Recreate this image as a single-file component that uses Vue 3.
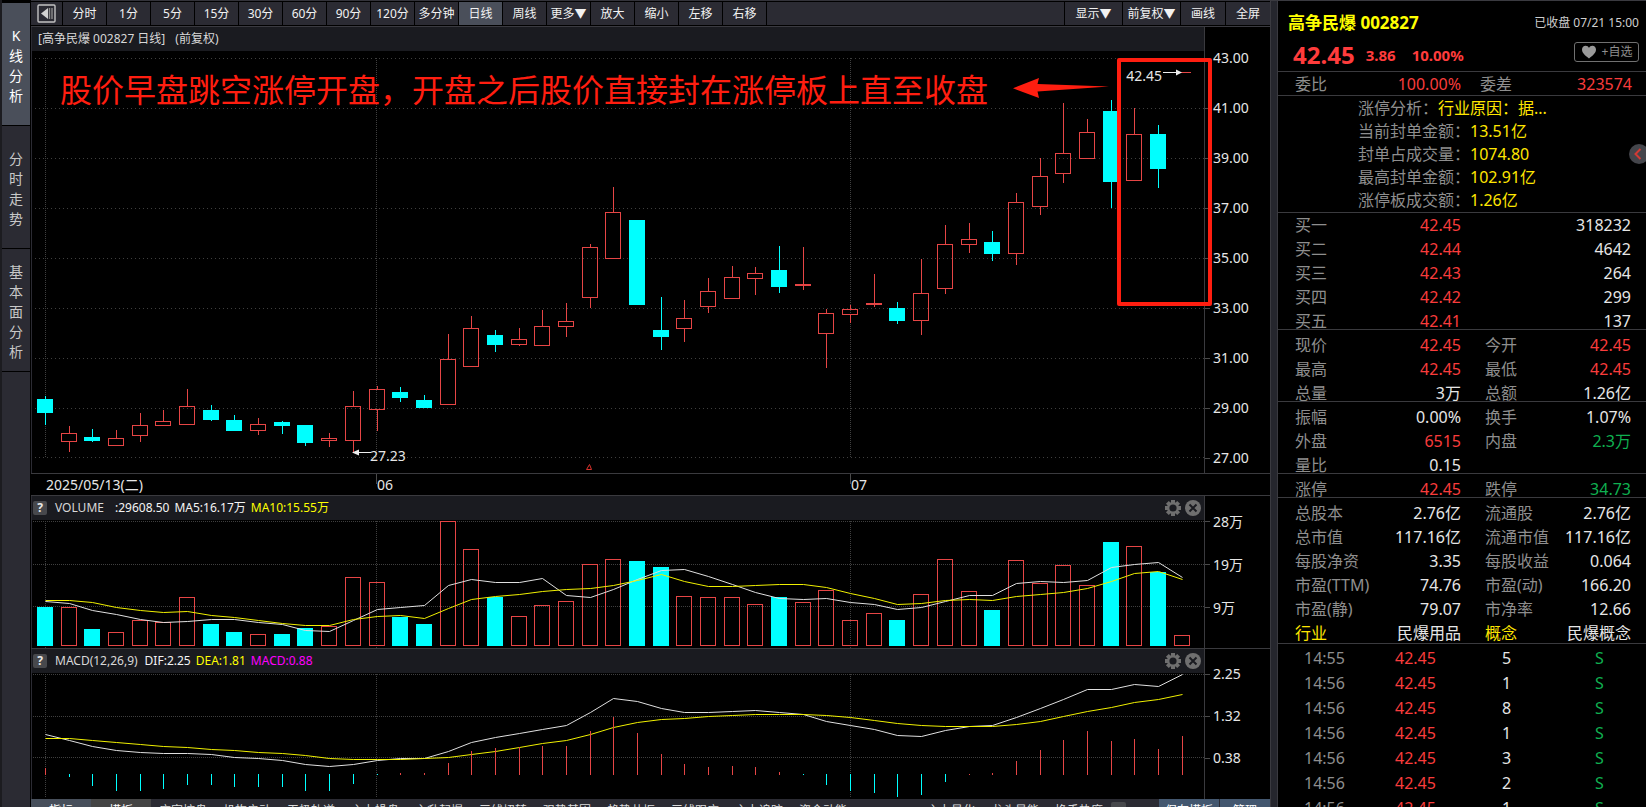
<script setup>
const sideTabs = ['K线分析', '分时走势', '基本面分析']
const periods = ['分时', '1分', '5分', '15分', '30分', '60分', '90分', '120分', '多分钟', '日线', '周线', '更多▼', '放大', '缩小', '左移', '右移']
const tools = ['显示▼', '前复权▼', '画线', '全屏']

const x = (i) => Math.round(45 + 23.68 * i)

// up flag, body top, body bottom, wick top, wick bottom
const candles = [
  [0, 399, 413, 396, 425], [1, 433, 442, 426, 452], [0, 437, 441, 429, 442], [1, 438, 446, 430, 446],
  [1, 425, 436, 413, 442], [1, 421, 426, 410, 426], [1, 406, 425, 389, 425], [0, 410, 420, 405, 421],
  [0, 420, 431, 415, 431], [1, 424, 431, 418, 435], [0, 422, 426, 421, 434], [0, 425, 443, 425, 446],
  [1, 438, 441, 433, 447], [1, 406, 441, 391, 452], [1, 389, 410, 386, 431], [0, 392, 398, 387, 402],
  [0, 400, 408, 395, 408], [1, 359, 405, 334, 405], [1, 328, 367, 316, 367], [0, 335, 345, 330, 352],
  [1, 339, 345, 328, 346], [1, 326, 346, 310, 346], [1, 321, 327, 303, 337], [1, 247, 298, 244, 308],
  [1, 212, 259, 187, 259], [0, 220, 305, 220, 305], [0, 330, 337, 297, 350], [1, 318, 329, 300, 342],
  [1, 291, 307, 278, 313], [1, 277, 299, 266, 299], [1, 273, 279, 267, 295], [0, 270, 287, 246, 293],
  [1, 284, 286, 247, 290], [1, 313, 334, 309, 368], [1, 309, 315, 305, 323], [1, 303, 305, 274, 307],
  [0, 308, 321, 302, 324], [1, 293, 321, 259, 335], [1, 244, 289, 225, 294], [1, 239, 245, 223, 253],
  [0, 242, 254, 231, 261], [1, 202, 254, 193, 265], [1, 176, 207, 158, 215], [1, 153, 174, 103, 183],
  [1, 132, 159, 119, 159], [0, 111, 182, 100, 208], [1, 134, 181, 108, 181], [0, 134, 169, 125, 188],
  [1, 72, 73, 72, 73],
]
const volTops = [
  607, 607, 629, 632, 620, 622, 597, 624, 632, 634, 634, 628, 626, 577, 582, 617, 624, 521, 549, 597, 616, 605, 601, 564, 559,
  561, 567, 596, 597, 597, 604, 597, 602, 590, 620, 613, 620, 594, 559, 591, 610, 560, 583, 565, 585, 542, 546, 572, 635,
]
const ma5 = [
  601, 603, 610, 614, 619, 622, 621, 619, 619, 622, 624, 630, 631, 620, 609, 607, 605, 585, 579, 582, 582, 578, 595, 597, 589,
  579, 570, 569, 576, 584, 592, 598, 599, 598, 602, 604, 609, 607, 601, 595, 595, 583, 581, 582, 580, 567, 564, 562, 577,
]
const ma10 = [
  600, 600, 602, 607, 610, 612, 611, 615, 617, 620, 623, 625, 625, 619, 616, 615, 618, 608, 599, 596, 594, 591, 589, 588, 585,
  580, 574, 581, 586, 586, 585, 584, 584, 587, 593, 598, 604, 603, 600, 599, 600, 596, 594, 592, 588, 581, 573, 571, 579,
]
const dif = [
  734, 740, 746, 750, 752, 753, 753, 754, 757, 758, 760, 764, 766, 764, 760, 758, 758, 751, 742, 737, 733, 729, 725, 712, 698,
  701, 708, 712, 712, 711, 710, 712, 714, 721, 725, 729, 735, 736, 730, 726, 725, 717, 708, 699, 689, 689, 684, 686, 674,
]
const dea = [
  738, 738, 740, 742, 744, 746, 747, 749, 750, 752, 753, 755, 758, 759, 759, 759, 758, 757, 754, 751, 747, 743, 740, 734, 727,
  722, 719, 718, 716, 715, 714, 714, 714, 715, 717, 720, 723, 725, 726, 726, 726, 724, 721, 716, 711, 707, 702, 699, 694,
]
const macd = [
  768, 777, 786, 791, 791, 789, 785, 785, 787, 787, 787, 791, 791, 784, 775, 773, 773, 763, 751, 748, 747, 746, 746, 731, 717,
  733, 754, 764, 767, 766, 767, 772, 775, 785, 791, 793, 797, 795, 782, 774, 773, 761, 750, 740, 731, 741, 739, 749, 736,
]
const line = (ys) => ys.map((y, i) => `${x(i) + 0.5},${y + 0.5}`).join(' ')

const monthLines = [45, 376, 850]
const priceRows = [58, 108, 158, 208, 258, 308, 358, 408, 457]
const priceLabels = ['43.00', '41.00', '39.00', '37.00', '35.00', '33.00', '31.00', '29.00', '27.00']

const analysis = [
  ['涨停分析：', '行业原因：据...'],
  ['当前封单金额：', '13.51亿'],
  ['封单占成交量：', '1074.80'],
  ['最高封单金额：', '102.91亿'],
  ['涨停板成交额：', '1.26亿'],
]
const bids = [['买一', '42.45', '318232'], ['买二', '42.44', '4642'], ['买三', '42.43', '264'], ['买四', '42.42', '299'], ['买五', '42.41', '137']]
const stats = [
  [['现价', '42.45', 'up', '今开', '42.45', 'up'], ['最高', '42.45', 'up', '最低', '42.45', 'up'], ['总量', '3万', '', '总额', '1.26亿', '']],
  [['振幅', '0.00%', '', '换手', '1.07%', ''], ['外盘', '6515', 'up', '内盘', '2.3万', 'down'], ['量比', '0.15', '', '', '', '']],
  [['涨停', '42.45', 'up', '跌停', '34.73', 'down']],
  [
    ['总股本', '2.76亿', '', '流通股', '2.76亿', ''],
    ['总市值', '117.16亿', '', '流通市值', '117.16亿', ''],
    ['每股净资', '3.35', '', '每股收益', '0.064', ''],
    ['市盈(TTM)', '74.76', '', '市盈(动)', '166.20', ''],
    ['市盈(静)', '79.07', '', '市净率', '12.66', ''],
    ['行业', '民爆用品', '', '概念', '民爆概念', ''],
  ],
]
const trades = [['14:55', 5], ['14:56', 1], ['14:56', 8], ['14:56', 1], ['14:56', 3], ['14:56', 2], ['14:56', 1]]
const templates = ['庄家控盘', '机构启动', '无极轨道', '主力操盘', '主升起爆', '三线扭转', '强势基因', '趋势共振', '三线跟庄', '主力追踪', '资金动能']
const extras = ['主力量化', '龙头量能', '换手热度']
const teeth = [0, 45, 90, 135, 180, 225, 270, 315]
</script>

<template>
  <div class="app">
    <nav class="side">
      <button v-for="(t, i) in sideTabs" :key="t" type="button" :class="{ active: i === 0 }">
        <span v-for="c in t" :key="c">{{ c }}</span>
      </button>
    </nav>

    <main class="center">
      <div class="toolbar">
        <button class="back" type="button" aria-label="后退">
          <svg width="20" height="20" viewBox="0 0 20 20">
            <rect x="1" y="1" width="17" height="17" rx="1" fill="none" stroke="#c4c4c4" stroke-width="1.4" />
            <path d="M4 9.5 L11 4 V15 Z" fill="#d2d2d2" />
            <path d="M12.5 4 V15 M15 4 V15" stroke="#8d8d8d" stroke-width="1.4" />
          </svg>
        </button>
        <button v-for="p in periods" :key="p" type="button" class="period" :class="{ active: p === '日线' }">{{ p }}</button>
        <span class="spacer"></span>
        <button v-for="(t, i) in tools" :key="t" type="button" :class="i < 2 ? 'wide' : 'tool'">{{ t }}</button>
      </div>

      <section class="pane price">
        <div class="plot">
          <h1 class="pane-head title"><span>[高争民爆 002827 日线]</span><span>(前复权)</span></h1>
          <svg class="chart" height="422" viewBox="32 51 1172 422" preserveAspectRatio="none" shape-rendering="crispEdges">
            <path v-for="y in priceRows" :key="y" :d="`M35 ${y + 0.5} H1204`" class="grid sparse" />
            <path v-for="m in monthLines" :key="m" :d="`M${m + 0.5} 58 V457`" class="grid" />
            <g v-for="(c, i) in candles" :key="i" :class="c[0] ? 'rise' : 'fall'">
              <path v-if="c[3] < c[1]" :d="`M${x(i) + 0.5} ${c[3]} V${c[1]}`" />
              <path v-if="c[4] > c[2]" :d="`M${x(i) + 0.5} ${c[2]} V${c[4]}`" />
              <rect v-if="c[2] - c[1] > 1" :x="x(i) - 7.5" :y="c[1] + 0.5" width="15" :height="c[2] - c[1] - 1" />
              <path v-else :d="`M${x(i) - 8} ${c[1] + 0.5} h17`" />
            </g>
            <g shape-rendering="auto">
              <path d="M353 452.5 H371" class="pointer" />
              <path d="M352 452.5 L359 449.5 V455.5 Z" fill="#eee" />
              <path d="M1163 72.5 H1178" class="pointer" />
              <path d="M1182 72.5 L1176 69.5 V75.5 Z" fill="#eee" />
              <path d="M586.5 469.5 L589.5 464.5 L591.5 469.5 Z" fill="none" stroke="#d8322c" />
            </g>
          </svg>
          <span class="mark low">27.23</span>
          <span class="mark high">42.45</span>
          <p class="note">股价早盘跳空涨停开盘，开盘之后股价直接封在涨停板上直至收盘</p>
          <svg class="note-arrow" width="98" height="22" viewBox="0 0 98 22">
            <path d="M1 11.3 L27 1 L25.5 7 L97 9.5 L25.5 14.5 L27 21 Z" fill="#ff1e10" />
          </svg>
        </div>
        <ol class="axis">
          <li v-for="l in priceLabels" :key="l">{{ l }}</li>
        </ol>
        <div class="focus-box"></div>
      </section>

      <div class="dates"><span>2025/05/13(二)</span><span>06</span><span>07</span></div>

      <section class="pane volume">
        <div class="plot">
          <header class="pane-head">
            <button class="help" type="button">?</button>
            <span class="name">VOLUME</span>
            <span class="white vol-now">:29608.50</span><span class="white">MA5:16.17万</span><span class="yellow">MA10:15.55万</span>
            <span class="spacer"></span>
            <button v-for="k in ['设置', '关闭']" :key="k" type="button" class="round" :aria-label="k">
              <svg width="18" height="18" viewBox="-9 -9 18 18">
                <template v-if="k === '设置'">
                  <rect v-for="a in teeth" :key="a" x="-2" y="-8" width="4" height="4" fill="#6f6f6f" :transform="`rotate(${a})`" />
                  <circle r="4.8" fill="none" stroke="#6f6f6f" stroke-width="2.4" />
                </template>
                <template v-else>
                  <circle r="8" fill="#6f6f6f" />
                  <path d="M-3.5 -3.5 L3.5 3.5 M3.5 -3.5 L-3.5 3.5" stroke="#1a1b20" stroke-width="2" />
                </template>
              </svg>
            </button>
          </header>
          <svg class="chart" height="128" viewBox="32 520 1172 128" preserveAspectRatio="none" shape-rendering="crispEdges">
            <path v-for="y in [521, 564, 606]" :key="y" :d="`M33 ${y + 0.5} H1204`" class="grid" />
            <path v-for="m in monthLines" :key="m" :d="`M${m + 0.5} 521 V648`" class="grid" />
            <rect v-for="(t, i) in volTops" :key="i" :class="candles[i][0] ? 'rise' : 'fall'" :x="x(i) - 7.5" :y="t + 0.5" width="15" :height="645 - t" />
            <g shape-rendering="auto">
              <polyline :points="line(ma5)" class="curve light" />
              <polyline :points="line(ma10)" class="curve gold" />
            </g>
          </svg>
        </div>
        <ol class="axis"><li>28万</li><li>19万</li><li>9万</li></ol>
      </section>

      <section class="pane macd">
        <div class="plot">
          <header class="pane-head">
            <button class="help" type="button">?</button>
            <span class="name">MACD(12,26,9)</span>
            <span class="white">DIF:2.25</span><span class="yellow">DEA:1.81</span><span class="magenta">MACD:0.88</span>
            <span class="spacer"></span>
            <button v-for="k in ['设置', '关闭']" :key="k" type="button" class="round" :aria-label="k">
              <svg width="18" height="18" viewBox="-9 -9 18 18">
                <template v-if="k === '设置'">
                  <rect v-for="a in teeth" :key="a" x="-2" y="-8" width="4" height="4" fill="#6f6f6f" :transform="`rotate(${a})`" />
                  <circle r="4.8" fill="none" stroke="#6f6f6f" stroke-width="2.4" />
                </template>
                <template v-else>
                  <circle r="8" fill="#6f6f6f" />
                  <path d="M-3.5 -3.5 L3.5 3.5 M3.5 -3.5 L-3.5 3.5" stroke="#1a1b20" stroke-width="2" />
                </template>
              </svg>
            </button>
          </header>
          <svg class="chart" height="126" viewBox="32 673 1172 126" preserveAspectRatio="none" shape-rendering="crispEdges">
            <path v-for="y in [674, 716, 757]" :key="y" :d="`M33 ${y + 0.5} H1204`" class="grid" />
            <path v-for="m in monthLines" :key="m" :d="`M${m + 0.5} 674 V797`" class="grid" />
            <g shape-rendering="auto">
              <polyline :points="line(dif)" class="curve light" />
              <polyline :points="line(dea)" class="curve gold" />
            </g>
            <path v-for="(v, i) in macd" :key="i" :class="v < 775 ? 'rise' : 'fall'" :d="`M${x(i) + 0.5} ${v} V${v < 775 ? 775 : 774}`" />
          </svg>
        </div>
        <ol class="axis"><li>2.25</li><li>1.32</li><li>0.38</li></ol>
      </section>

      <div class="bottom">
        <button type="button" class="kind on">指标</button>
        <button type="button" class="kind">模板</button>
        <button v-for="t in templates" :key="t" type="button" class="tpl">{{ t }}</button>
        <span class="spacer"></span>
        <button v-for="t in extras" :key="t" type="button" class="tpl">{{ t }}</button>
        <button type="button" class="more">▸</button>
        <span class="fill"></span>
        <button type="button" class="save">保存模板</button>
        <button type="button" class="save manage">管理</button>
      </div>
    </main>

    <div class="divider"></div>

    <aside class="quote">
      <header class="quote-head">
        <div class="quote-line">
          <h2>高争民爆 002827</h2>
          <span class="time">已收盘 07/21 15:00</span>
        </div>
        <div class="quote-line price-line">
          <strong class="last">42.45</strong><strong class="chg">3.86</strong><strong class="pct">10.00%</strong>
          <button type="button" class="fav">
            <svg width="16" height="14" viewBox="0 0 16 14"><path d="M8 13.5 C4 10.5 1 8 1 4.6 C1 2.2 2.7 0.8 4.6 0.8 C6.2 0.8 7.4 1.7 8 3 C8.6 1.7 9.8 0.8 11.4 0.8 C13.3 0.8 15 2.2 15 4.6 C15 8 12 10.5 8 13.5 Z" fill="#9a9a9a" /></svg>
            +自选
          </button>
        </div>
      </header>
      <dl class="ratio"><dt>委比</dt><dd>100.00%</dd><dt>委差</dt><dd>323574</dd></dl>
      <dl class="analysis">
        <div v-for="a in analysis" :key="a[0]"><dt>{{ a[0] }}</dt><dd>{{ a[1] }}</dd></div>
      </dl>
      <table class="block bids">
        <tbody>
          <tr v-for="b in bids" :key="b[0]"><th scope="row">{{ b[0] }}</th><td class="up">{{ b[1] }}</td><td class="qty">{{ b[2] }}</td></tr>
        </tbody>
      </table>
      <table v-for="(g, gi) in stats" :key="gi" class="block" :class="{ tail: gi === 3 }">
        <tbody>
          <tr v-for="r in g" :key="r[0]" :class="{ sector: r[0] === '行业' }">
            <th scope="row">{{ r[0] }}</th><td :class="r[2]">{{ r[1] }}</td>
            <template v-if="r[3]"><th scope="row" class="second">{{ r[3] }}</th><td :class="r[5]">{{ r[4] }}</td></template>
          </tr>
        </tbody>
      </table>
      <table class="trades">
        <tbody>
          <tr v-for="(t, i) in trades" :key="i"><td class="clock">{{ t[0] }}</td><td class="up">42.45</td><td class="lots">{{ t[1] }}</td><td class="down lots">S</td></tr>
        </tbody>
      </table>
      <button type="button" class="drawer" aria-label="展开">
        <svg width="8" height="12" viewBox="0 0 8 12"><path d="M6.5 1 L1.5 6 L6.5 11" fill="none" stroke="#d23a34" stroke-width="2" /></svg>
      </button>
    </aside>
  </div>
</template>

<style>
body { margin: 0; background: #000; }
</style>

<style scoped>
.app {
  display: grid;
  grid-template-columns: 31px minmax(0, 1fr) 8px 368px;
  height: 100vh;
  overflow: hidden;
  background: #000;
  color: #e6e6e6;
  font-family: "Noto Sans", "Noto Sans CJK SC", sans-serif;
  font-size: 12px;
}
.app * { box-sizing: border-box; }
button { margin: 0; padding: 0; border: 0; background: none; color: inherit; font: inherit; white-space: nowrap; }
h1, h2, p, dl, dd, ol { margin: 0; padding: 0; font-weight: 400; }
ol { list-style: none; }
svg { display: block; flex: none; }
.spacer { flex: 1; }

.side { display: flex; flex-direction: column; gap: 1px; padding-top: 3px; border-left: 2px solid #1c1c20; border-right: 1px solid #000; background: #000; }
.side::after { content: ""; flex: 1; background: #2b2b33; }
.side button { display: flex; flex-direction: column; align-items: center; justify-content: center; height: 122px; padding-top: 4px; background: #2b2b33; color: #c8c8c8; font-size: 14px; line-height: 20px; }
.side .active { background: #4a4f5a; color: #fff; }

.center { min-width: 0; }
.toolbar { display: flex; height: 27px; padding: 1px 0; border-top: 1px solid #33333a; border-bottom: 1px solid #3a3a40; background: #000; gap: 1px; }
.toolbar > * { background: #2b2b33; color: #f2f2f2; line-height: 23px; }
.toolbar .back { display: flex; align-items: center; justify-content: center; width: 31px; }
.toolbar .period { width: 43px; }
.toolbar .wide { width: 57px; }
.toolbar .tool { width: 44px; }
.toolbar .active { background: #4a4f5a; }

.pane { position: relative; display: flex; }
.volume, .macd, .dates { border-top: 1px solid #3a3a3e; }
.plot { position: relative; flex: 1; min-width: 0; border-left: 1px solid #2b2b33; }
.pane-head { display: flex; align-items: center; height: 24px; padding: 0 2px 0 1px; background: #1a1b20; font-size: 12px; line-height: 24px; white-space: pre; color: #d8d8d8; }
.title { gap: 10px; padding-left: 6px; }
.chart { width: 100%; }
.grid { fill: none; stroke: #3f3f3f; stroke-width: 1; stroke-dasharray: 1 1; }
.sparse { stroke-dasharray: 1 3; }
.rise { stroke: #e64545; fill: none; }
.fall { stroke: #00ffff; fill: #00ffff; }
.curve { fill: none; stroke-width: 1; }
.light { stroke: #e0e0e0; }
.gold { stroke: #f0f000; }
.pointer { stroke: #eee; stroke-width: 1; }
.axis { width: 66px; padding-top: 6px; border-left: 1px solid #3a3a3e; font-size: 14px; line-height: 50px; }
.price .axis { height: 446px; }
.axis li { display: flex; align-items: center; gap: 3px; }
.axis li::before { content: ""; width: 5px; height: 1px; background: #4a4a4a; }
.volume .axis { padding-top: 4px; line-height: 43px; }
.macd .axis { padding-top: 4px; line-height: 42px; }
.mark { position: absolute; font-size: 14px; line-height: 20px; }
.low { left: 338px; top: 419px; }
.high { right: 42px; top: 39px; }
.note { position: absolute; left: 28px; top: 40px; color: #ff1e10; font-size: 32px; line-height: 46px; white-space: nowrap; }
.note-arrow { position: absolute; right: 94px; top: 50px; }
.focus-box { position: absolute; right: 58px; top: 31px; width: 95px; height: 248px; border: 4px solid #ff1e10; border-radius: 2px; }

.dates { display: grid; grid-template-columns: 331fr 474fr 419fr; height: 22px; padding-left: 15px; font-size: 14px; line-height: 21px; }
.dates span { position: relative; }
.dates span + span::before { content: ""; position: absolute; left: -1px; top: 0; width: 1px; height: 10px; background: #4a4a4a; }

.help { width: 14px; height: 14px; margin-right: 8px; border-radius: 2px; background: #47484c; color: #e8e8e8; font-size: 12px; font-weight: 700; line-height: 14px; }
.name { margin-right: 7px; }
.vol-now { margin-left: 4px; }
.white { margin-right: 5px; color: #f4f4f4; }
.yellow { margin-right: 5px; color: #ffff00; }
.magenta { color: #ff00ff; }
.round { margin-left: 2px; }

.bottom { display: flex; height: 24px; background: #2b2b33; line-height: 24px; color: #dcdcdc; }
.kind { width: 60px; background: #444; color: #fff; }
.on { background: #474f5b; }
.tpl { width: 64px; }
.more { align-self: start; width: 15px; height: 18px; margin-top: 3px; border-radius: 2px; background: #47484c; font-size: 8px; line-height: 16px; }
.fill { width: 33px; }
.save { width: 60px; background: #43576f; color: #fff; }
.manage { width: 51px; border-left: 1px solid #2b2b33; }

.divider { border: 1px solid #3a3a40; border-bottom: 0; background: #25262d; }

.quote { position: relative; border-top: 1px solid #3a3a40; font-size: 16px; line-height: 16px; overflow: hidden; }
.quote-head { height: 71px; padding: 9px 7px 0 10px; border-bottom: 1px solid #3a3a3e; }
.quote-line { display: flex; align-items: center; justify-content: space-between; height: 26px; }
.quote h2 { color: #ffff00; font-size: 17px; font-weight: 700; }
.time { color: #cfcfcf; font-size: 12px; }
.price-line { justify-content: flex-start; height: 35px; padding: 2px 0 0 5px; color: #ff3c3c; }
.last { font-size: 24px; }
.chg { margin-left: 11px; font-size: 15px; }
.pct { margin-left: 16px; font-size: 15px; }
.fav { display: flex; align-items: center; justify-content: center; gap: 5px; width: 65px; height: 20px; margin: -6px 0 0 auto; border: 1px solid #707070; border-radius: 3px; color: #8e8e8e; font-size: 12px; }
.ratio { display: grid; grid-template-columns: 80px 86px 80px 1fr; height: 24px; padding: 0 14px 0 17px; border-bottom: 1px solid #3a3a3e; line-height: 24px; }
.ratio dt, .analysis dt { color: #8e8e8e; }
.ratio dd { color: #f93c3c; text-align: right; }
.ratio dt + dd + dt { padding-left: 19px; }
.analysis { padding: 1px 0 0 80px; border-bottom: 1px solid #3a3a3e; line-height: 23px; }
.analysis div { display: flex; }
.analysis dd { color: #ffe600; }
.up { color: #f93c3c; }
.down { color: #0fb050; }
.block { display: block; padding: 7px 15px 0 17px; border-bottom: 1px solid #3a3a3e; }
.block tbody { display: grid; row-gap: 8px; }
.block tr { display: grid; grid-template-columns: 80px 86px 92px 1fr; white-space: nowrap; }
.block th, .block td { height: 16px; padding: 0; }
.block th { color: #8e8e8e; font-weight: 400; text-align: left; }
.block td { text-align: right; }
.block .second { padding-left: 24px; }
.bids { padding-top: 4px; }
.qty { grid-column: 3 / 5; }
.tail { padding-bottom: 2px; }
.block .sector th { color: #ffe600; }
.trades { display: block; padding: 2px 0 0 26px; line-height: 25px; }
.trades tbody { display: block; }
.trades tr { display: grid; grid-template-columns: 91px 65px 93px 1fr; }
.trades td { padding: 0; }
.clock { color: #8e8e8e; }
.lots { text-align: center; }
.drawer { position: absolute; right: -3px; top: 143px; display: flex; align-items: center; width: 20px; height: 20px; padding-left: 5px; border-radius: 50%; background: #44454b; }
</style>
